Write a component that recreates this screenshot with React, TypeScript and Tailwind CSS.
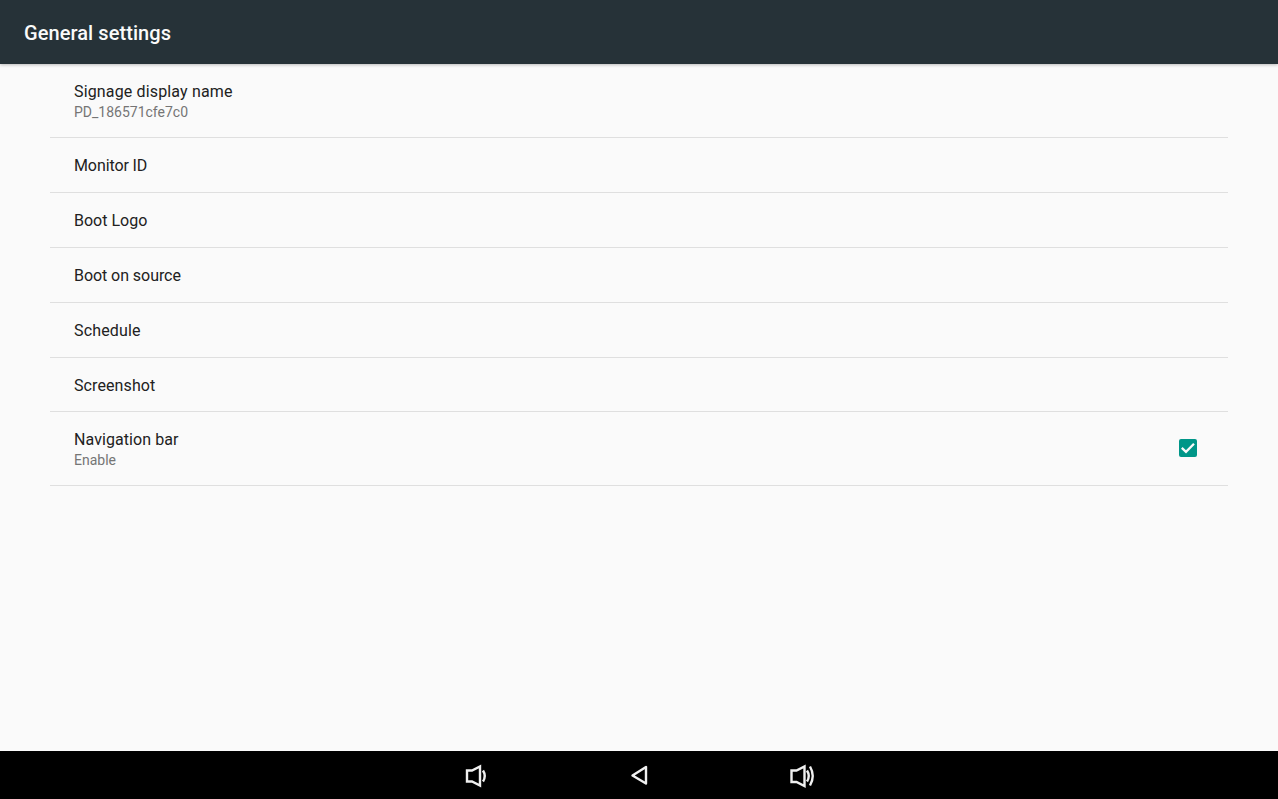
const Item = ({ title, sub, check, rowClass, titleClass }: { title: string; sub?: string; check?: boolean; rowClass: string; titleClass: string }) => (
  <div className={`flex items-center justify-between border-b border-[#dfdfdf] pl-6 pr-[31px] ${rowClass}`}>
    <div className={`flex flex-col ${sub ? "pt-[2px]" : ""}`}>
      <div className={`text-[16px] leading-[21px] text-[#212121] ${titleClass}`}>{title}</div>
      {sub && <div className="text-[14px] leading-[20px] text-[#757575]">{sub}</div>}
    </div>
    {check && (
      <svg width="18" height="18" viewBox="0 0 18 18" className="mb-[1px]">
        <rect width="18" height="18" rx="2" fill="#009688" />
        <path d="M2.8 8.8 L7 12.8 L15 4.8" fill="none" stroke="#fafafa" strokeWidth="2.3" />
      </svg>
    )}
  </div>
);

export default function App() {
  return (
    <div className="flex h-[799px] w-[1278px] flex-col overflow-hidden bg-[#fafafa] font-['Roboto',sans-serif]">
      <header className="z-10 flex h-[64px] shrink-0 items-center bg-[#263238] pl-6 pt-[2px] shadow-[0_1px_3px_rgba(0,0,0,0.25)]">
        <h1 className="text-[20px] font-medium tracking-[0.07px] text-[#fafafa]">General settings</h1>
      </header>
      <main className="flex-1 px-[50px]">
        <Item title="Signage display name" sub="PD_186571cfe7c0" rowClass="h-[74px]" titleClass="tracking-[0.15px]" />
        <Item title="Monitor ID" rowClass="h-[55px]" titleClass="tracking-[-0.1px]" />
        <Item title="Boot Logo" rowClass="h-[55px]" titleClass="tracking-[0px]" />
        <Item title="Boot on source" rowClass="h-[55px]" titleClass="tracking-[-0.06px]" />
        <Item title="Schedule" rowClass="h-[55px]" titleClass="tracking-[0.15px]" />
        <Item title="Screenshot" rowClass="h-[54px] pt-[1px]" titleClass="tracking-[0.1px]" />
        <Item title="Navigation bar" sub="Enable" check rowClass="h-[74px]" titleClass="tracking-[0.08px]" />
      </main>
      <footer className="flex h-[48px] shrink-0 items-center justify-center gap-[128px] bg-black pl-[2px]">
        <svg width="36" height="48" viewBox="0 0 36 48" fill="none" stroke="#f0f0f0" strokeWidth="2.4">
          <path d="M9 19.5 H14 L22 15.5 V34.5 L14 30.5 H9 Z" />
          <path d="M25 19.5 Q28.5 25 25 30.5" />
        </svg>
        <svg width="36" height="48" viewBox="0 0 36 48" fill="none" stroke="#f0f0f0" strokeWidth="2.4">
          <path d="M24 16 V32.5 L10.5 24.5 Z" strokeLinejoin="round" />
        </svg>
        <svg width="36" height="48" viewBox="0 0 36 48" fill="none" stroke="#f0f0f0" strokeWidth="2.4">
          <path d="M5.5 19.5 H10.5 L18.5 15.5 V35 L10.5 31 H5.5 Z" />
          <path d="M21 19.5 Q24.5 25 21 30.5" />
          <path d="M24 15.5 Q29.5 25 24 34.5" />
        </svg>
      </footer>
    </div>
  );
}
